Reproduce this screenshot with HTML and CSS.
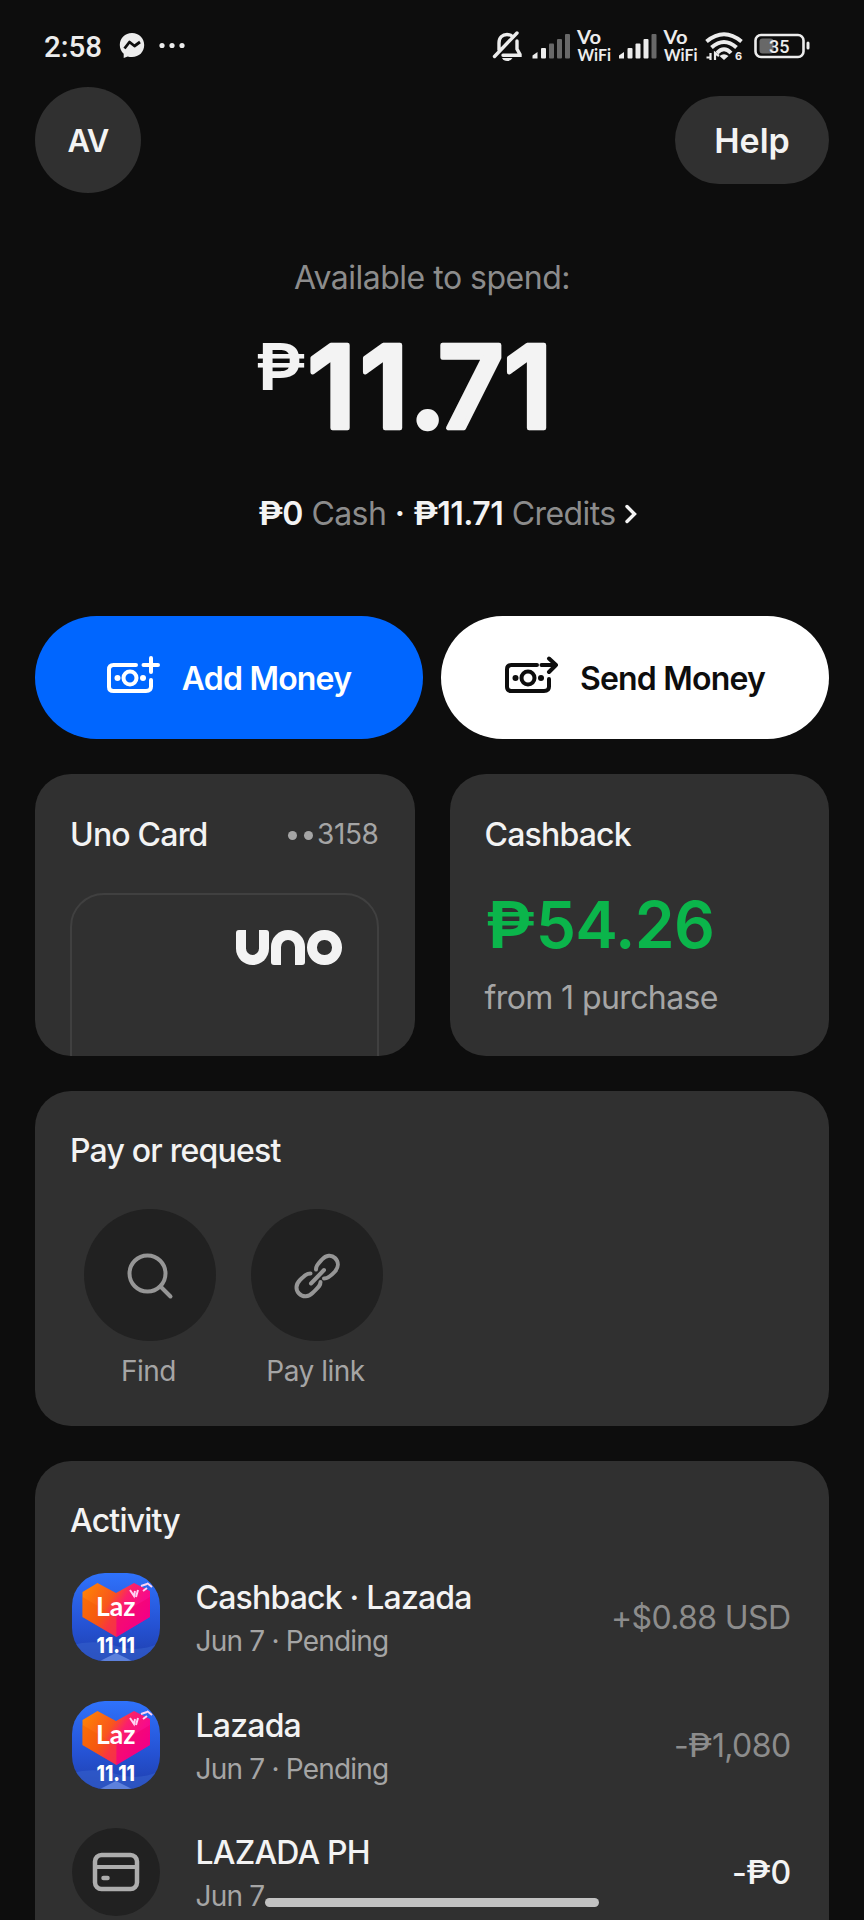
FILE: index.html
```html
<!DOCTYPE html>
<html lang="en">
<head>
<meta charset="utf-8">
<title>Wallet</title>
<link rel="stylesheet" href="styles.css">
</head>
<body>
<svg class="defs" width="0" height="0" aria-hidden="true">
  <defs>
    <linearGradient id="sky" x1="0" y1="0" x2="0" y2="1"><stop offset="0" stop-color="#2f72fb"/><stop offset=".6" stop-color="#2552d3"/><stop offset="1" stop-color="#1f3fae"/></linearGradient>
    <linearGradient id="warm" x1="0" y1="0" x2="1" y2=".5"><stop offset="0" stop-color="#ff8a00"/><stop offset=".45" stop-color="#f8561d"/><stop offset=".62" stop-color="#fb1f6c"/><stop offset="1" stop-color="#f5009c"/></linearGradient>
    <clipPath id="squircle"><rect width="88" height="88" rx="33"/></clipPath>
    <symbol id="laz" viewBox="0 0 88 88">
      <g clip-path="url(#squircle)">
        <rect width="88" height="88" fill="url(#sky)"/>
        <path d="M0 72Q22 66 44 73T88 70V88H0Z" fill="#3560cc" opacity=".6"/>
        <path d="M28 88L44 80L60 88Z" fill="#7fa0ee" opacity=".6"/>
        <path d="M10.500 19L25.500 10L44 20L62 10L78 18V44L44.500 64L10.500 44Z" fill="url(#warm)"/>
        <path d="M10.500 24L44.500 44V64L10.500 44Z" fill="#f35b00" opacity=".4"/>
        <path d="M44.500 44L78 24V44L44.500 64Z" fill="#f2006c" opacity=".5"/>
        <path d="M58 17l4 6 1-5M64 24l2-7M69 13l6-2M71 18l4-3M75 10l5 4" fill="none" stroke="#ffd3f4" stroke-width="2"/>
      </g>
      <text class="laz-name" x="24" y="43.300" textLength="39.500" lengthAdjust="spacingAndGlyphs">Laz</text>
      <text class="laz-sale" x="24.500" y="80" textLength="38.500" lengthAdjust="spacingAndGlyphs">11.11</text>
    </symbol>
  </defs>
</svg>

<main class="screen">
  <div class="status">
    <span class="clock">2:58</span>
    <svg class="notices" width="70" height="28" viewBox="0 0 70 28">
      <path d="M13 1C6 1 .8 6 .8 13c0 3.500 1.400 6.500 3.900 8.700V26l4-1.600c1.300.4 2.800.6 4.300.6 7 0 12.200-5 12.200-12S20 1 13 1Z" fill="#ececec"/>
      <path d="M5.500 16.500l5-6.500 5 4 5.500-4" fill="none" stroke="#0d0d0d" stroke-width="2.800" stroke-linejoin="round"/>
      <circle cx="43" cy="13.500" r="2.600" fill="#ececec"/><circle cx="53" cy="13.500" r="2.600" fill="#ececec"/><circle cx="63" cy="13.500" r="2.600" fill="#ececec"/>
    </svg>
    <svg class="radios" width="322" height="40" viewBox="0 0 322 40" fill="#ececec">
      <g fill="none" stroke="#ececec" stroke-width="3.400">
        <path d="M9 22V15c0-5.500 3.500-8.500 8-8.500 2.500 0 4.500.8 6 2.500M27 13v8l3 5.500v.8H13M4.500 28.500L27 5" stroke-linecap="round"/>
      </g>
      <path d="M12 30h10.500q-1.500 3-5.250 3T12 30Z"/>
      <g>
        <path d="M42.500 30.500v-3l5-3.500v6.500Z"/><rect x="51" y="20" width="5" height="10.500" rx="1"/>
        <g fill="#686868"><rect x="59" y="15.500" width="5" height="15" rx="1"/><rect x="67" y="11" width="5" height="19.500" rx="1"/><rect x="75" y="6" width="5" height="24.500" rx="1"/></g>
      </g>
      <g>
        <path d="M129 30.500v-3l5-3.500v6.500Z"/><rect x="137.500" y="20" width="5" height="10.500" rx="1"/><rect x="145.500" y="15.500" width="5" height="15" rx="1"/><rect x="153.500" y="11" width="5" height="19.500" rx="1"/>
        <rect x="161.500" y="6" width="5" height="24.500" rx="1" fill="#686868"/>
      </g>
      <g class="vowifi">
        <text class="vo" x="87" y="16" textLength="24" lengthAdjust="spacingAndGlyphs">Vo</text><text x="87.500" y="33" textLength="33.500" lengthAdjust="spacingAndGlyphs">WiFi</text>
        <text class="vo" x="173.500" y="16" textLength="24" lengthAdjust="spacingAndGlyphs">Vo</text><text x="174" y="33" textLength="33.500" lengthAdjust="spacingAndGlyphs">WiFi</text>
      </g>
      <g fill="none" stroke="#ececec" stroke-width="4">
        <path d="M216.500 13.500Q234 -1 251.500 13.500"/><path d="M221.500 19.500Q234 8.500 246.500 19.500"/><path d="M227 25Q234 17.500 241 25"/>
      </g>
      <path d="M229.500 28q4.500-3.500 9 0L234 32Z"/>
      <path d="M220.500 25v7M216.500 29.500h4M225 32v-7l4 3" stroke="#ececec" stroke-width="2.200" fill="none"/>
      <text class="tiny" x="245" y="32">6</text>
      <rect x="265.500" y="7" width="48" height="22" rx="5.500" fill="none" stroke="#ececec" stroke-width="2.600"/>
      <rect x="269.500" y="10.500" width="14" height="15" rx="3" fill="#686868"/>
      <text class="charge" x="279" y="24.700" textLength="20.500">35</text>
      <rect x="316.500" y="13.500" width="3" height="8" rx="1.500"/>
    </svg>
  </div>

  <header class="top">
    <div class="avatar">AV</div>
    <div class="help">Help</div>
  </header>

  <section class="hero">
    <div class="caption">Available to spend:</div>
    <svg class="balance" width="310" height="150" viewBox="0 -24 310 150">
      <text class="peso" x="-1" y="52" textLength="51" lengthAdjust="spacingAndGlyphs">₱</text>
      <text class="sum" x="51.500 104 153.500 182 248" y="90">11.71</text>
    </svg>
    <div class="split"><span><b class="p">₱</b><b>0</b></span> <span>Cash</span> <b>·</b> <span><b class="p">₱</b><b>11.71</b></span> <span>Credits</span>
      <svg width="14" height="20" viewBox="0 0 14 20"><path d="M3 2.500L10.500 10 3 17.500" fill="none" stroke="#f3f3f3" stroke-width="3.400" stroke-linecap="round"/></svg>
    </div>
  </section>

  <nav class="actions">
    <div class="pill add">
      <svg width="56" height="42" viewBox="0 0 56 42" fill="none" stroke="currentColor" stroke-width="4" stroke-linecap="round" stroke-linejoin="round">
        <path d="M31 11H8.500Q4 11 4 15.500V33Q4 37 8.500 37H41Q46 37 46 32.500V26M38.500 11H53M46 4V18"/>
        <circle cx="25" cy="24" r="6.500"/><g fill="currentColor" stroke="none"><circle cx="12.500" cy="24" r="3"/><circle cx="38" cy="24" r="3"/></g>
      </svg>
      <span>Add Money</span>
    </div>
    <div class="pill send">
      <svg width="56" height="42" viewBox="0 0 56 42" fill="none" stroke="currentColor" stroke-width="4" stroke-linecap="round" stroke-linejoin="round">
        <path d="M34 11H8.500Q4 11 4 15.500V33Q4 37 8.500 37H41Q46 37 46 32.500V25M38.500 11H53M46 4.500L53 11L46 18"/>
        <circle cx="25" cy="24" r="6.500"/><g fill="currentColor" stroke="none"><circle cx="12.500" cy="24" r="3"/><circle cx="38" cy="24" r="3"/></g>
      </svg>
      <span>Send Money</span>
    </div>
  </nav>

  <div class="pair">
    <section class="card uno">
      <div class="card-head"><h2>Uno Card</h2><span class="digits"><i></i><i></i>3158</span></div>
      <div class="plastic">
        <div class="wordmark" role="img" aria-label="Uno"><span class="cup"></span><span class="arch"></span><span class="ring"></span></div>
      </div>
    </section>
    <section class="card cashback">
      <h2>Cashback</h2>
      <div class="earned"><span class="p">₱</span>54.26</div>
      <div class="from">from 1 purchase</div>
    </section>
  </div>

  <section class="card pay">
    <h2>Pay or request</h2>
    <div class="shortcuts">
      <div class="shortcut">
        <div class="disc"><svg width="50" height="50" viewBox="0 0 50 50" fill="none" stroke="#969696" stroke-width="4" stroke-linecap="round"><circle cx="22.500" cy="23.500" r="18"/><path d="M35.500 36.500L45.500 46.500"/></svg></div>
        <span>Find</span>
      </div>
      <div class="shortcut">
        <div class="disc"><svg width="50" height="50" viewBox="0 0 50 50" fill="none" stroke="#969696" stroke-width="4" stroke-linecap="round"><path d="M24 19.500C24 16 25.500 14.500 30 9.500C34 5 39.500 4.500 43 8C47 12 46.500 17.500 43 21.500C38 27 35.500 28.500 32 28.500"/><path d="M18.500 23.500C14.500 23.500 12.500 25.500 8 30C3.500 34.500 3.500 40 7 43.500C11 47.500 16.500 47 20.500 43C26 37.500 28.500 36 28.500 32"/><path d="M19 33.500L32 20"/></svg></div>
        <span>Pay link</span>
      </div>
    </div>
  </section>

  <section class="card activity">
    <h2>Activity</h2>
    <div class="row">
      <svg class="logo" width="88" height="88"><use href="#laz"/></svg>
      <div class="what"><div class="name">Cashback · Lazada</div><div class="when">Jun 7 · Pending</div></div>
      <div class="value">+$0.88 USD</div>
    </div>
    <div class="row">
      <svg class="logo" width="88" height="88"><use href="#laz"/></svg>
      <div class="what"><div class="name">Lazada</div><div class="when">Jun 7 · Pending</div></div>
      <div class="value">-<span class="p">₱</span>1,080</div>
    </div>
    <div class="row">
      <div class="logo generic"><svg width="48" height="40" viewBox="0 0 48 40" fill="none" stroke="#adadad" stroke-width="4.500" stroke-linecap="round"><rect x="3" y="3" width="42" height="34" rx="6.500"/><path d="M3 15H45" stroke-width="4"/><path d="M11.500 26H15.500" stroke-width="4.500"/></svg></div>
      <div class="what"><div class="name">LAZADA PH</div><div class="when">Jun 7</div></div>
      <div class="value done">-<span class="p">₱</span>0</div>
    </div>
  </section>
  <div class="homebar"></div>
</main>
</body>
</html>
```
FILE: styles.css
```css
* { box-sizing: border-box; }
body { margin: 0; background: #0d0d0d; color: #f3f3f3; font: 400 32px/40px Inter, sans-serif; }
.defs { display: block; }
.screen { position: relative; width: 864px; height: 1920px; overflow: hidden; padding: 0 35px; }
svg { display: block; flex: none; }
h2 { margin: 0; font-size: 32px; line-height: 40px; font-weight: 500; letter-spacing: -0.8px; white-space: nowrap; }
.p { display: inline-block; letter-spacing: 0; margin-right: 2.5px; transform: scaleX(1.13); transform-origin: left; }

.status { display: flex; height: 87px; padding: 28px 0 0 9px; }
.clock { width: 75px; font: 500 29.5px/39px Roboto, sans-serif; color: #ececec; }
.notices { margin-top: 4px; }
.radios { margin-left: 301px; }
.vowifi { font: 700 17px Lato, sans-serif; }
.vo { font-size: 18.5px; }
.tiny { font: 700 11px Inter, sans-serif; }
.charge { font: 500 18px Roboto, sans-serif; }

.top { display: flex; justify-content: space-between; align-items: center; height: 106px; }
.avatar { width: 106px; height: 106px; border-radius: 50%; background: #303030; text-align: center; font-size: 31px; line-height: 107px; font-weight: 600; letter-spacing: -1px; }
.help { width: 154px; height: 88px; border-radius: 44px; background: #303030; text-align: center; font-size: 34px; line-height: 89px; font-weight: 600; }

.hero { display: flex; flex-direction: column; padding-top: 65px; height: 423px; }
.caption { align-self: center; color: #8c8c8c; letter-spacing: -0.5px; }
.balance { margin: 16px 0 0 221px; }
.peso { font: 600 64px Inter, sans-serif; fill: #f3f3f3; }
.sum { font: 600 114px Inter, sans-serif; fill: #f3f3f3; stroke: #f3f3f3; stroke-width: 4.5; stroke-linejoin: round; }
.split { display: flex; align-items: center; gap: 8.5px; margin: 30px 0 0 223px; color: #8c8c8c; white-space: nowrap; letter-spacing: -0.6px; }
.split b { color: #f3f3f3; font-weight: 600; letter-spacing: -0.5px; }

.actions { display: grid; grid-template-columns: 1fr 1fr; gap: 18px; }
.pill { display: flex; align-items: center; justify-content: center; gap: 21px; height: 123px; padding-right: 2px; border-radius: 62px; font-weight: 600; letter-spacing: -0.8px; white-space: nowrap; }
.pill span { margin-top: 2px; }
.add { background: #0066ff; color: #fff; }
.send { background: #fff; color: #0d0d0d; }
.pill svg { margin-top: -5px; }

.pair { display: grid; grid-template-columns: 1fr 1fr; gap: 35px; margin-top: 35px; }
.card { border-radius: 36px; background: #303030; padding: 40px 36px 0 35px; overflow: hidden; }
.pair .card { height: 282px; padding-top: 41px; }
.card-head { display: flex; justify-content: space-between; }
.digits { display: flex; align-items: center; font-size: 28px; color: #a5a5a5; line-height: 38px; height: 38px; letter-spacing: -0.4px; }
.digits i { width: 9px; height: 9px; border-radius: 50%; background: #a5a5a5; margin: 3px 6.5px 0 0; }
.digits i + i { margin-right: 4.5px; }
.plastic { display: flex; justify-content: flex-end; height: 220px; margin-top: 38px; padding: 35px 35px 0 0; border: 2px solid #404040; border-radius: 34px; }
.wordmark { display: flex; gap: 2.5px; width: 106px; height: 35px; }
.wordmark span { width: 33.5px; height: 34.5px; border: 10.5px solid #f3f3f3; }
.wordmark .cup { border-top: 0; border-radius: 3px 3px 17px 17px; }
.wordmark .arch { border-bottom: 0; border-radius: 17px 17px 3px 3px; }
.wordmark .ring { width: 34.5px; border-radius: 50%; }
.earned { margin-top: 30px; font-size: 64px; line-height: 80px; font-weight: 600; color: #0bb54b; letter-spacing: -0.7px; }
.earned .p { margin-right: 6.5px; }
.from { margin-top: 13px; color: #a5a5a5; letter-spacing: -0.6px; white-space: nowrap; }

.pay { height: 335px; margin-top: 35px; }
.shortcuts { display: flex; gap: 35px; margin: 38px 0 0 14px; }
.shortcut { width: 132px; text-align: center; font-size: 28px; line-height: 34px; color: #a5a5a5; letter-spacing: -0.5px; }
.shortcut span { display: block; margin: 13px 3px 0 0; white-space: nowrap; }
.disc { display: grid; place-items: center; height: 132px; border-radius: 50%; background: #212121; }

.activity { height: 500px; margin-top: 35px; border-radius: 36px 36px 0 0; }
.row { display: flex; align-items: center; height: 88px; margin-top: 39.5px; }
h2 + .row { margin-top: 32px; }
.logo { width: 88px; height: 88px; margin-left: 2px; flex: none; }
.generic { display: grid; place-items: center; border-radius: 50%; background: #212121; }
.what { margin: 6px 0 0 35.5px; flex: 1; white-space: nowrap; }
.name { font-weight: 500; letter-spacing: -0.8px; line-height: 42px; }
.when { font-size: 28px; line-height: 44px; color: #a5a5a5; letter-spacing: -0.8px; }
.value { color: #8c8c8c; margin: 2px 2.5px 0 0; letter-spacing: -0.6px; white-space: nowrap; }
.done { color: #f3f3f3; font-weight: 500; }
.laz-name { font: 700 26px Lato, sans-serif; fill: #fff; }
.laz-sale { font: 800 22px Inter, sans-serif; fill: #fff; }
.homebar { position: absolute; left: 265px; top: 1898px; width: 334px; height: 9px; border-radius: 5px; background: #c2c2c2; }
```
